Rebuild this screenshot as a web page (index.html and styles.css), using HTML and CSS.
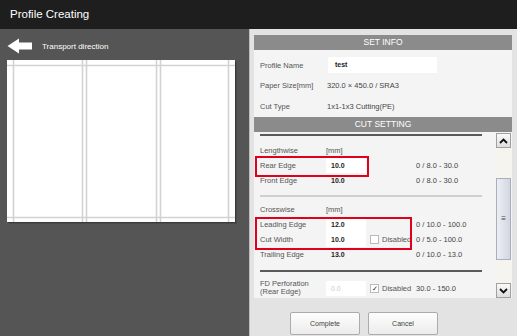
FILE: index.html
```html
<!DOCTYPE html>
<html lang="en">
<head>
  <meta charset="UTF-8" />
  <title>Profile Creating</title>
  <link rel="stylesheet" href="styles.css">
</head>
<body>
  <div class="titlebar">Profile Creating</div>
  <div class="main">
    <div class="preview">
      <div class="direction">
        <svg width="26" height="16" viewBox="0 0 26 16">
          <polygon points="0.5,8 12,0.5 12,4.5 25,4.5 25,11.5 12,11.5 12,15.5" fill="#fff" />
        </svg>
        <span>Transport direction</span>
      </div>
      <div class="paper">
        <svg width="228" height="162" viewBox="0 0 228 162">
          <g stroke="#d2d2d2" stroke-width="1.6">
            <line x1="0" y1="5.5" x2="228" y2="5.5" />
            <line x1="0" y1="157.5" x2="228" y2="157.5" />
            <line x1="6.5" y1="0" x2="6.5" y2="162" />
            <line x1="75.5" y1="0" x2="75.5" y2="162" />
            <line x1="79.5" y1="0" x2="79.5" y2="162" />
            <line x1="149.5" y1="0" x2="149.5" y2="162" />
            <line x1="153.5" y1="0" x2="153.5" y2="162" />
            <line x1="221.5" y1="0" x2="221.5" y2="162" />
          </g>
        </svg>
      </div>
    </div>

    <div class="settings">
      <div class="panel">
        <div class="section-head">SET INFO</div>
        <div class="info">
          <span class="label">Profile Name</span><span class="field name-field">test</span>
          <span class="label">Paper Size[mm]</span><span class="text">320.0 × 450.0 / SRA3</span>
          <span class="label">Cut Type</span><span class="text">1x1-1x3 Cutting(PE)</span>
        </div>
        <div class="section-head cut-head">CUT SETTING</div>
        <div class="cut">
          <div class="cut-body">
            <div class="rule dark first"></div>
            <div class="row group-title"><span class="label">Lengthwise</span><span class="unit">[mm]</span></div>
            <div class="row"><span class="label">Rear Edge</span><span class="field">10.0</span><span></span><span class="range">0 / 8.0 - 30.0</span></div>
            <div class="row"><span class="label">Front Edge</span><span class="value">10.0</span><span></span><span class="range">0 / 8.0 - 30.0</span></div>
            <div class="rule light"></div>
            <div class="row group-title cross"><span class="label">Crosswise</span><span class="unit">[mm]</span></div>
            <div class="row"><span class="label">Leading Edge</span><span class="field">12.0</span><span></span><span class="range">0 / 10.0 - 100.0</span></div>
            <div class="row"><span class="label">Cut Width</span><span class="field">10.0</span><span class="check"><i class="box"></i>Disabled</span><span class="range">0 / 5.0 - 100.0</span></div>
            <div class="row"><span class="label">Trailing Edge</span><span class="value">13.0</span><span></span><span class="range">0 / 10.0 - 13.0</span></div>
            <div class="rule dark"></div>
            <div class="row tall"><span class="label">FD Perforation<br>(Rear Edge)</span><span class="field off">0.0</span><span class="check"><i class="box">✓</i>Disabled</span><span class="range">30.0 - 150.0</span></div>
            <div class="row tall"><span class="label">FD Perforation<br>(Front Edge)</span><span class="field off">0.0</span><span class="check"><i class="box">✓</i>Disabled</span><span class="range">30.0 - 150.0</span></div>

            <div class="mark mark-rear"></div>
            <div class="mark mark-cross"></div>
          </div>
          <div class="scrollbar">
            <div class="sb-btn">
              <svg width="9" height="6" viewBox="0 0 9 6"><polyline points="1,5 4.5,1.5 8,5" fill="none" stroke="#111" stroke-width="1.8" /></svg>
            </div>
            <div class="sb-track"><div class="sb-thumb">≡</div></div>
            <div class="sb-btn">
              <svg width="9" height="6" viewBox="0 0 9 6"><polyline points="1,1 4.5,4.5 8,1" fill="none" stroke="#111" stroke-width="1.8" /></svg>
            </div>
          </div>
        </div>
      </div>
      <div class="actions">
        <button>Complete</button>
        <button>Cancel</button>
      </div>
    </div>
  </div>
</body>
</html>
```

FILE: styles.css
```css
body {
  margin: 0;
  width: 517px;
  height: 336px;
  overflow: hidden;
  font-family: 'Liberation Sans', Arial, sans-serif;
  background: #555;
}
.titlebar {
  height: 29px;
  background: #1e1e1e;
  color: #fff;
  font-size: 11.5px;
  line-height: 29px;
  padding-left: 10px;
}
.main {
  display: flex;
  height: 307px;
}

/* left: paper preview */
.preview {
  width: 249px;
  background: #555;
}
.direction {
  display: flex;
  align-items: center;
  gap: 9px;
  padding: 9px 0 0 7px;
  height: 16px;
  color: #fff;
  font-size: 8px;
}
.direction svg {
  display: block;
}
.paper {
  margin: 6px 0 0 7px;
  width: 228px;
  height: 162px;
  background: #fff;
  box-shadow: 1px 1px 0 #3a3a3a, 2px 2px 0 #4a4a4a;
}
.paper svg {
  display: block;
}

/* right: settings */
.settings {
  flex: 1;
  background: #e3e3e3;
  border-left: 1px solid #bdbdbd;
  padding: 6px 5px 0 4px;
}
.panel {
  background: #f4f4f4;
}
.section-head {
  height: 15px;
  line-height: 15px;
  background: #8b8b8b;
  color: #fff;
  font-size: 8.5px;
  text-align: center;
}
.info {
  display: grid;
  grid-template-columns: 67px 110px;
  grid-auto-rows: 16px;
  row-gap: 4.5px;
  align-items: center;
  padding: 7px 0 3px 6px;
  font-size: 7.5px;
}
.label {
  color: #555;
  font-size: 7.5px;
}
.text {
  color: #444;
}
.field {
  background: #fff;
  height: 16px;
  line-height: 16px;
  padding-left: 5px;
  color: #222;
  font-weight: bold;
  font-size: 7px;
}
.name-field {
  margin-left: 1px;
  padding-left: 7px;
}

.cut {
  display: flex;
  height: 166px;
}
.cut-body {
  position: relative;
  flex: 1;
  overflow: hidden;
  padding-left: 6px;
}
.rule {
  width: 222px;
  height: 2px;
}
.rule.dark {
  background: #5a5a5a;
  margin-top: 8px;
}
.rule.dark.first {
  margin-top: 2px;
}
.rule.light {
  background: #cfcfcf;
  margin-top: 7px;
}
.row {
  display: grid;
  grid-template-columns: 66px 40px 50px auto;
  height: 15px;
  align-items: center;
  font-size: 7.5px;
}
.row .field {
  height: 15px;
  line-height: 15px;
}
.group-title {
  margin-top: 7px;
}
.group-title.cross {
  margin-top: 5px;
}
.unit {
  color: #555;
}
.value {
  padding-left: 5px;
  color: #222;
  font-weight: bold;
  font-size: 7px;
}
.range {
  color: #444;
}
.check {
  display: flex;
  align-items: center;
  gap: 3px;
  padding-left: 4px;
  color: #555;
}
.box {
  display: inline-block;
  width: 7px;
  height: 7px;
  border: 1px solid #bbb;
  background: #fff;
  font-style: normal;
  font-size: 7px;
  line-height: 7px;
  text-align: center;
  color: #222;
}
.row.tall {
  height: 20px;
  margin-top: 6px;
}
.row.tall .label {
  line-height: 8.5px;
}
.field.off {
  color: #ccc;
  font-weight: normal;
}
.mark {
  position: absolute;
  border: 2px solid #e0001b;
}
.mark-rear {
  left: 1px;
  top: 24px;
  width: 110px;
  height: 17px;
}
.mark-cross {
  left: 1px;
  top: 85px;
  width: 153px;
  height: 29px;
}

/* scrollbar */
.scrollbar {
  width: 15px;
  margin-right: 1px;
  display: flex;
  flex-direction: column;
  padding-top: 1px;
}
.sb-btn {
  height: 15px;
  border: 1px solid #a0a0a0;
  box-sizing: border-box;
  background: linear-gradient(#fafafa, #dedede);
  display: flex;
  align-items: center;
  justify-content: center;
}
.sb-track {
  flex: 1;
  background: #f6f4ef;
  padding-top: 30px;
}
.sb-thumb {
  height: 82px;
  box-sizing: border-box;
  border: 1px solid #a8aebb;
  background: linear-gradient(to right, #eceef3, #d2d6e0);
  text-align: center;
  line-height: 80px;
  font-size: 8px;
  color: #444;
}

.actions {
  display: flex;
  gap: 8px;
  padding: 14px 0 0 36px;
}
.actions button {
  width: 70px;
  height: 23px;
  border: 1px solid #ababab;
  border-radius: 2px;
  background: linear-gradient(#fdfdfd, #ececec);
  font-family: 'Liberation Sans', Arial, sans-serif;
  font-size: 7px;
  color: #444;
  padding: 0;
}
```
